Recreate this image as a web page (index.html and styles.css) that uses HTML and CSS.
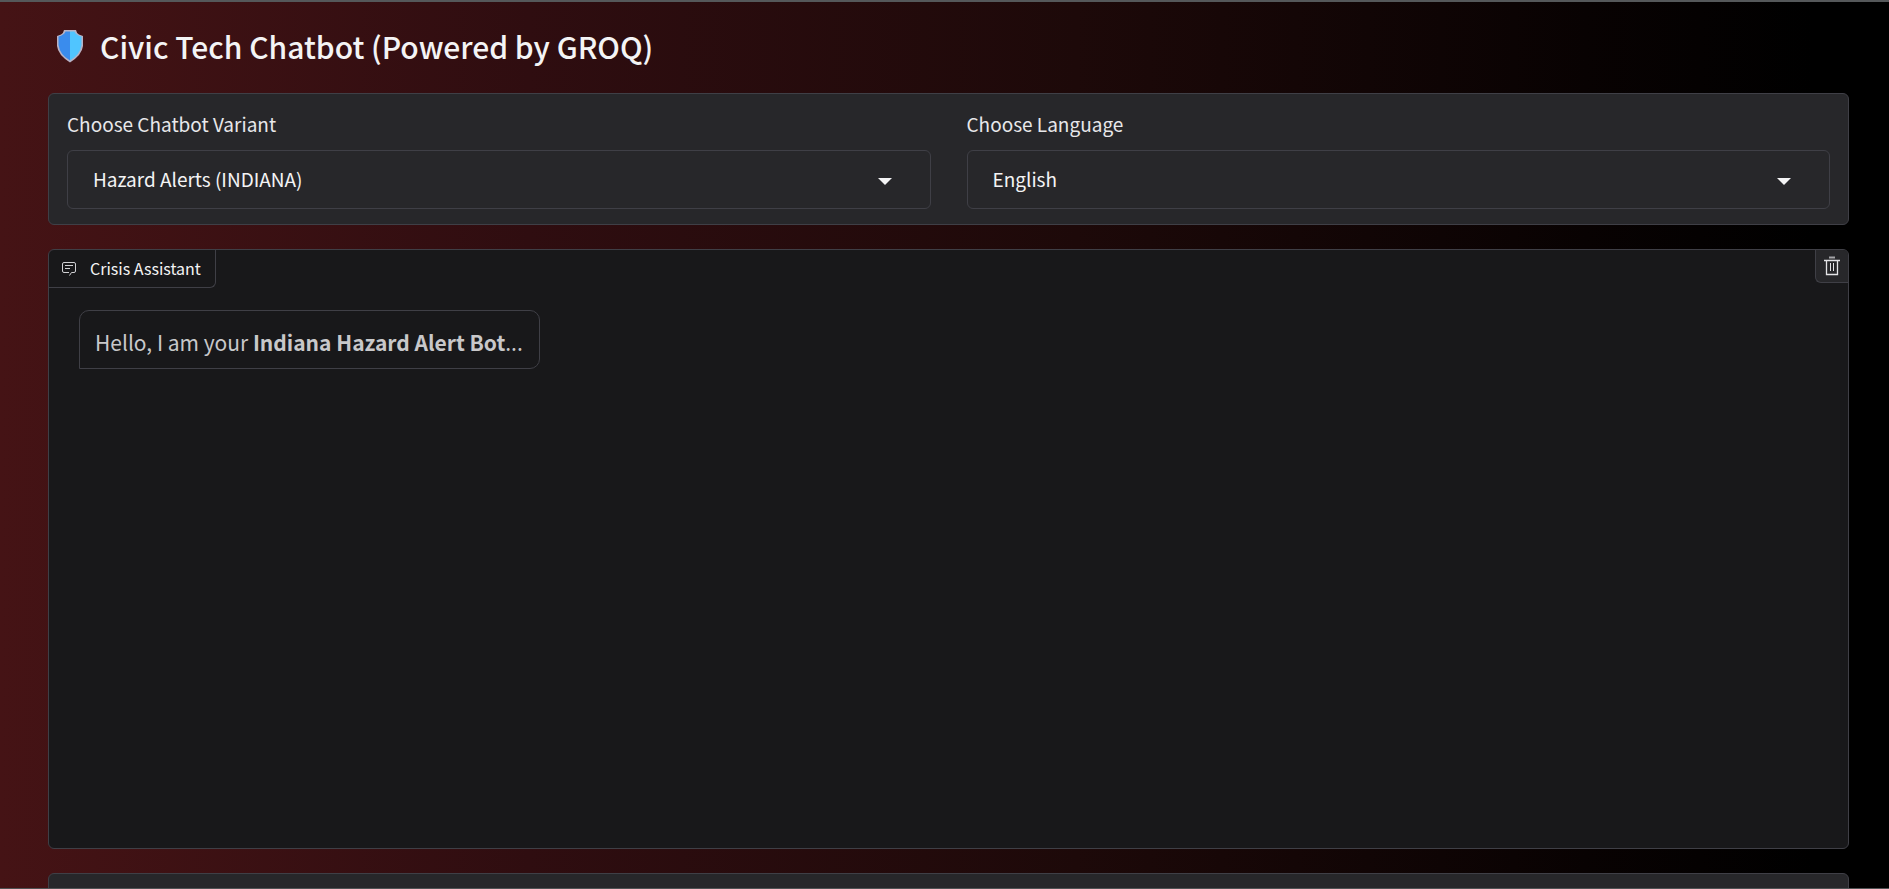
FILE: index.html
```html
<!DOCTYPE html>
<html lang="en">
<head>
<meta charset="utf-8">
<title>Civic Tech Chatbot</title>
<link rel="stylesheet" href="styles.css">
</head>
<body>
<main class="page">
  <h1 class="title">
    <svg class="shield" viewBox="0 0 28 34" aria-hidden="true">
      <path d="M8 1H20Q20.500 4 23 5.500L27 7V17Q26 26 14 33.500Q2 26 1 17V7L5 5.500Q7.500 4 8 1Z" fill="#b9b2c4"/>
      <path d="M14 2.500H9.500Q8 6 2.500 7.500V16Q4 26 14 31.500Z" fill="#3a8ced"/>
      <path d="M14 2.500H18.500Q20 6 25.500 7.500V16Q24 26 14 31.500Z" fill="#50c5ff"/>
    </svg>
    Civic Tech Chatbot (Powered by GROQ)
  </h1>

  <section class="panel options">
    <div class="field">
      <label for="variant">Choose Chatbot Variant</label>
      <div class="select-wrap">
        <select id="variant"><option>Hazard Alerts (INDIANA)</option></select>
        <svg class="caret" viewBox="0 0 14 7" aria-hidden="true"><path d="M0 0H14L7 7Z" fill="#f4f4f5"/></svg>
      </div>
    </div>
    <div class="field">
      <label for="language">Choose Language</label>
      <div class="select-wrap">
        <select id="language"><option>English</option></select>
        <svg class="caret" viewBox="0 0 14 7" aria-hidden="true"><path d="M0 0H14L7 7Z" fill="#f4f4f5"/></svg>
      </div>
    </div>
  </section>

  <section class="panel chat">
    <header class="chat-bar">
      <h2 class="chat-label">
        <svg class="chat-icon" viewBox="0 0 14 14" fill="none" stroke="#d0d0d3" aria-hidden="true">
          <path d="M7.500 13.500L9.500 10.500H12Q13.500 10.500 13.500 9V2Q13.500 .5 12 .5H2Q.5 .5 .5 2V9Q.5 10.500 2 10.500H7M3 3.500H11M3 6.500H8"/>
        </svg>
        Crisis Assistant
      </h2>
      <button class="clear" type="button" aria-label="Clear conversation">
        <svg class="trash" viewBox="0 0 16 20" fill="none" aria-hidden="true">
          <path d="M5 1.500H11" stroke="#a5a5a8" stroke-width="2"/>
          <path d="M0 4.500H16M2.500 4V18.500H13.500V4" stroke="#e4e4e7" stroke-width="1.300"/>
          <path d="M6.500 7V15M9.500 7V15" stroke="#e4e4e7"/>
        </svg>
      </button>
    </header>
    <p class="message">Hello, I am your <strong>Indiana Hazard Alert Bot</strong>...</p>
  </section>

  <section class="panel composer"></section>
</main>
</body>
</html>
```
FILE: styles.css
```css
* { box-sizing: border-box; }

html { height: 100%; overflow: hidden; }

body {
  margin: 0;
  height: 100%;
  overflow: hidden;
  border-top: 2px solid #55585a;
  border-bottom: 1px solid #505254;
  background: linear-gradient(to right, #451315, #2f0d10 28%, #1d0909 57%, #080202 84%, #000 96%);
  color: #f4f4f5;
  font-family: "Noto Sans CJK SC", "Noto Sans", sans-serif;
}

.page {
  display: flex;
  flex-direction: column;
  gap: 24px;
  padding: 22px 40px 0 48px;
}

.title {
  display: flex;
  align-items: center;
  gap: 16px;
  height: 45px;
  margin: 0;
  padding: 0 8px 1px;
  font-size: 30px;
  line-height: 44px;
  font-weight: 500;
}

.shield { width: 28px; height: 34px; }

.panel {
  border: 1px solid #3f3f46;
  border-radius: 6px;
  background: #27272a;
}

.options {
  display: grid;
  grid-template-columns: 1fr 1fr;
  gap: 36px;
  padding: 15px 18px;
}

.field { display: flex; flex-direction: column; gap: 12px; }

.field label { font-size: 19px; line-height: 29px; color: #e8e8ea; }

.select-wrap { position: relative; }

.select-wrap select {
  display: block;
  appearance: none;
  width: 100%;
  height: 59px;
  padding: 0 60px 2px 25px;
  border: 1px solid #3f3f46;
  border-radius: 6px;
  background: transparent;
  color: #f4f4f5;
  font: inherit;
  font-size: 19px;
}

.caret {
  position: absolute;
  top: 28px;
  right: 39px;
  width: 14px;
  height: 7px;
  pointer-events: none;
}

.chat { min-height: 600px; background: #18181a; }

.chat-bar { display: flex; justify-content: space-between; align-items: flex-start; }

.chat-label {
  display: flex;
  align-items: center;
  gap: 14px;
  margin: 0;
  padding: 0 14px 0 13px;
  border: solid #3f3f46;
  border-width: 0 1px 1px 0;
  border-bottom-right-radius: 6px;
  font-size: 16px;
  line-height: 37px;
  font-weight: 400;
}

.chat-icon { width: 14px; height: 14px; }

.clear {
  display: grid;
  place-items: center;
  width: 33px;
  height: 33px;
  padding: 0;
  border: solid #3f3f46;
  border-width: 0 0 1px 1px;
  border-radius: 0 5px 0 6px;
  background: #27272a;
}

.trash { width: 16px; height: 20px; }

.message {
  width: fit-content;
  margin: 22px 30px;
  padding: 16px 16px 10px 15px;
  border: 1px solid #3f3f46;
  border-radius: 10px 10px 10px 0;
  color: #c8c8ca;
  font-size: 21px;
  line-height: 31px;
}

.composer { height: 80px; }
```
